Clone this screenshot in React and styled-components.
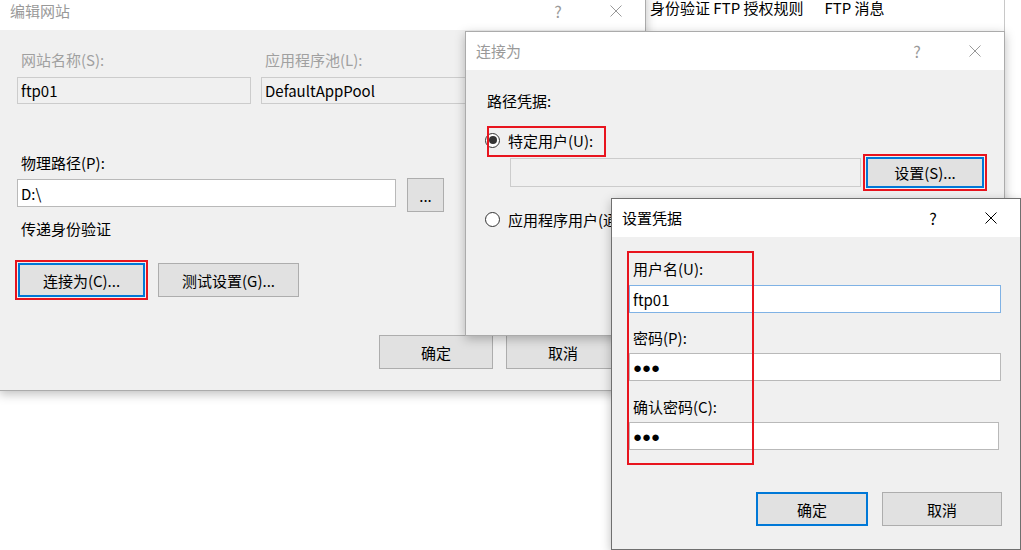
import React from "react";
import styled, { createGlobalStyle } from "styled-components";

const GlobalStyle = createGlobalStyle`
  html, body {
    margin: 0;
    padding: 0;
    background: #fff;
  }
  body {
    font-family: "Noto Sans CJK SC", "Noto Sans", sans-serif;
    font-size: 15px;
    color: #000;
  }
`;

const RED = "#e8141e";

const Desktop = styled.div`
  position: relative;
  width: 1021px;
  height: 550px;
  overflow: hidden;
  background: #fff;
`;

// window behind the dialogs (only its header strip shows)
const BackWindow = styled.div`
  position: absolute;
  left: 643px;
  top: -12px;
  width: 362px;
  height: 44px;
  box-sizing: border-box;
  background: #fff;
  border-left: 1px solid #c8c8c8;
  border-right: 1px solid #c8c8c8;
  display: flex;
  gap: 21px;
  padding: 10px 0 0 6px;
  line-height: 20px;
  white-space: nowrap;
`;

const Window = styled.div`
  position: absolute;
  left: ${(p) => p.$x}px;
  top: ${(p) => p.$y}px;
  width: ${(p) => p.$w}px;
  height: ${(p) => p.$h}px;
  box-sizing: border-box;
  display: flex;
  flex-direction: column;
  background: #f0f0f0;
  border: 1px solid ${(p) => (p.$active ? "#6f6f6f" : "#ababab")};
  box-shadow: 0 3px 10px rgba(0, 0, 0, 0.26);
`;

const TitleBar = styled.div`
  height: 38px;
  flex: none;
  display: flex;
  align-items: center;
  background: #fff;
  padding-left: 10px;
  color: ${(p) => (p.$active ? "#000" : "#999")};
`;

const TitleText = styled.div`
  flex: 1;
  line-height: 20px;
`;

const TitleButton = styled.div`
  width: 58px;
  height: 100%;
  display: flex;
  align-items: center;
  justify-content: center;
  font-size: 16px;
`;

const Body = styled.div`
  position: relative;
  flex: 1;
  display: flex;
  flex-direction: column;
  overflow: hidden;
  padding: ${(p) => p.$pad};
`;

const Label = styled.div`
  height: 20px;
  line-height: 20px;
  padding-left: 4px;
  white-space: nowrap;
  margin-top: ${(p) => p.$mt || 0}px;
  color: ${(p) => (p.$disabled ? "#a0a0a0" : "#000")};
`;

const TextBox = styled.input`
  box-sizing: border-box;
  width: ${(p) => p.$w}px;
  height: ${(p) => p.$h || 28}px;
  margin: ${(p) => p.$mt || 0}px 0 0 0;
  padding: 0 0 0 3px;
  font: inherit;
  font-family: ${(p) =>
    p.$secret ? '"Liberation Sans", "DejaVu Sans", sans-serif' : "inherit"};
  font-size: 15px;
  color: #000;
  outline: none;
  background: ${(p) => (p.$disabled ? "#f0f0f0" : "#fff")};
  border: 1px solid
    ${(p) => (p.$focused ? "#7fb2e5" : p.$disabled ? "#cccccc" : "#b9b9b9")};
`;

const Button = styled.button`
  box-sizing: border-box;
  width: ${(p) => p.$w}px;
  height: ${(p) => p.$h || 34}px;
  margin: 0;
  padding: 0;
  font: inherit;
  color: #000;
  background: #e1e1e1;
  border: ${(p) => (p.$focus ? "2px solid #0078d7" : "1px solid #adadad")};
  outline: ${(p) => (p.$mark ? `2px solid ${RED}` : "none")};
  outline-offset: 1px;
  white-space: nowrap;
`;

const FieldGrid = styled.div`
  display: grid;
  grid-template-columns: 234px 210px;
  column-gap: 10px;
  row-gap: 7px;
  align-items: start;
`;

const Row = styled.div`
  display: flex;
  align-items: flex-start;
  gap: ${(p) => p.$gap || 0}px;
  margin-top: ${(p) => p.$mt || 0}px;
  margin-left: ${(p) => p.$ml || 0}px;
`;

const Footer = styled.div`
  margin-top: auto;
  display: flex;
  justify-content: flex-end;
  gap: ${(p) => p.$gap}px;
`;

const RadioRow = styled.div`
  position: relative;
  display: flex;
  align-items: center;
  gap: 8px;
  height: 20px;
  margin-top: ${(p) => p.$mt}px;
  margin-left: 2px;
  white-space: nowrap;

  &::after {
    content: "";
    display: ${(p) => (p.$mark ? "block" : "none")};
    position: absolute;
    left: 2px;
    top: -4px;
    width: 119px;
    height: 31px;
    box-sizing: border-box;
    border: 2px solid ${RED};
  }
`;

const Radio = styled.span`
  flex: none;
  width: 15px;
  height: 15px;
  box-sizing: border-box;
  border-radius: 50%;
  border: 1px solid #333;
  background: #fff;
  display: flex;
  align-items: center;
  justify-content: center;

  &::after {
    content: "";
    display: ${(p) => (p.$checked ? "block" : "none")};
    width: 8px;
    height: 8px;
    border-radius: 50%;
    background: #333;
  }
`;

const Highlight = styled.div`
  position: absolute;
  left: 15px;
  top: 14px;
  width: 127px;
  height: 214px;
  box-sizing: border-box;
  border: 2px solid ${RED};
  pointer-events: none;
`;

const CloseIcon = () => (
  <svg width="12" height="12" viewBox="0 0 12 12">
    <path d="M0.5 0.5 L11.5 11.5 M11.5 0.5 L0.5 11.5" stroke="currentColor" strokeWidth="1" fill="none" />
  </svg>
);

const Titlebar = ({ title, active }) => (
  <TitleBar $active={active}>
    <TitleText>{title}</TitleText>
    <TitleButton>?</TitleButton>
    <TitleButton>
      <CloseIcon />
    </TitleButton>
  </TitleBar>
);

const EditSite = () => (
  <Window $x={-1} $y={-9} $w={647} $h={400}>
    <Titlebar title="编辑网站" />
    <Body $pad="20px 25px 21px 17px">
      <FieldGrid>
        <Label $disabled>网站名称(S):</Label>
        <Label $disabled>应用程序池(L):</Label>
        <TextBox $w={234} $h={27} $disabled readOnly value="ftp01" />
        <TextBox $w={210} $h={27} $disabled readOnly value="DefaultAppPool" />
      </FieldGrid>
      <Label $mt={49}>物理路径(P):</Label>
      <Row $gap={11} $mt={5}>
        <TextBox $w={379} $mt={1} readOnly value="D:\" />
        <Button $w={37}>...</Button>
      </Row>
      <Label $mt={7}>传递身份验证</Label>
      <Row $gap={13} $mt={24} $ml={1}>
        <Button $w={127} $focus $mark>连接为(C)...</Button>
        <Button $w={141}>测试设置(G)...</Button>
      </Row>
      <Footer $gap={13}>
        <Button $w={114}>确定</Button>
        <Button $w={114}>取消</Button>
      </Footer>
    </Body>
  </Window>
);

const ConnectAs = () => (
  <Window $x={465} $y={31} $w={540} $h={305}>
    <Titlebar title="连接为" />
    <Body $pad="21px 20px 20px 17px">
      <Label>路径凭据:</Label>
      <RadioRow $mt={19} $mark>
        <Radio $checked />
        <span>特定用户(U):</span>
      </RadioRow>
      <Row $gap={5} $mt={7} $ml={27}>
        <TextBox $w={351} $h={29} $mt={1} $disabled readOnly value="" />
        <Button $w={118} $h={31} $focus $mark>设置(S)...</Button>
      </Row>
      <RadioRow $mt={21}>
        <Radio />
        <span>应用程序用户(通过身份验证)</span>
      </RadioRow>
    </Body>
  </Window>
);

const SetCredentials = () => (
  <Window $x={611} $y={198} $w={410} $h={352} $active>
    <Titlebar title="设置凭据" active />
    <Body $pad="22px 18px 23px 17px">
      <Label>用户名(U):</Label>
      <TextBox $w={372} $mt={6} $focused readOnly value="ftp01" />
      <Label $mt={15}>密码(P):</Label>
      <TextBox $w={372} $mt={5} $secret readOnly value="●●●" />
      <Label $mt={16}>确认密码(C):</Label>
      <TextBox $w={370} $mt={5} $secret readOnly value="●●●" />
      <Footer $gap={14}>
        <Button $w={112} $focus>确定</Button>
        <Button $w={120}>取消</Button>
      </Footer>
      <Highlight />
    </Body>
  </Window>
);

export default function App() {
  return (
    <>
      <GlobalStyle />
      <Desktop>
        <BackWindow>
          <span>身份验证 FTP 授权规则</span>
          <span>FTP 消息</span>
        </BackWindow>
        <EditSite />
        <ConnectAs />
        <SetCredentials />
      </Desktop>
    </>
  );
}
